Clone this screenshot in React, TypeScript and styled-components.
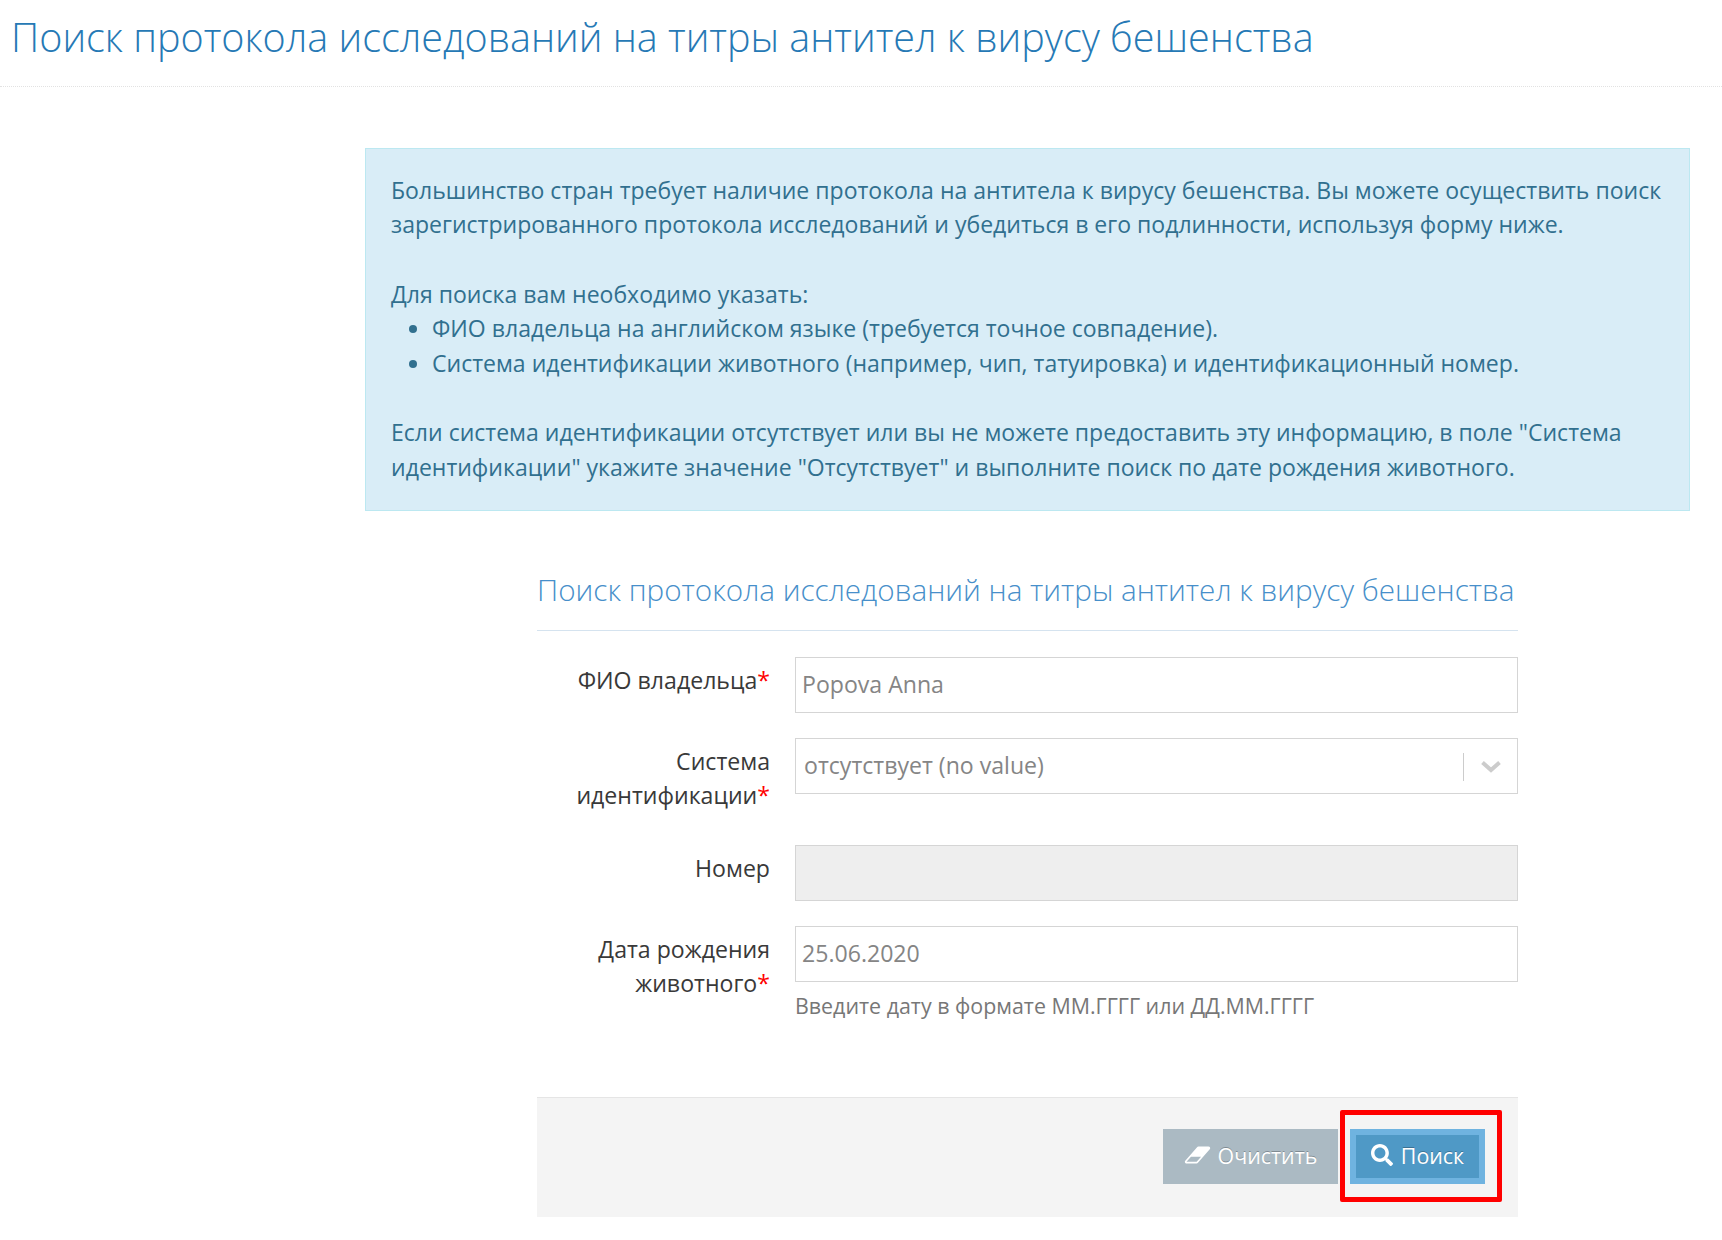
import { FC, ReactNode } from "react";
import styled, { createGlobalStyle } from "styled-components";
import { FaSearch } from "react-icons/fa";

const GlobalStyle = createGlobalStyle`
    * { box-sizing: border-box; }
    html, body { margin: 0; padding: 0; background: #fff; }
    body {
        font-family: "Open Sans", "Noto Sans", sans-serif;
        font-size: 23.1px;
        color: #393939;
    }
`
const Page = styled.div`
    width: 1722px;
    height: 1240px;
    overflow: hidden;
`
const PageHeader = styled.div`
    height: 87px;
    padding: 10px 0 0 11px;
    border-bottom: 1px dotted #e2e2e2;
`
const PageTitle = styled.h1`
    margin: 0;
    font-size: 39.5px;
    line-height: 54px;
    font-weight: 300;
    color: #2679b5;
    white-space: nowrap;
`
const Alert = styled.div`
    margin: 61px 32px 0 365px;
    height: 363px;
    padding: 23.6px 18px 0 25px;
    background: #d9edf7;
    border: 1px solid #bce8f1;
    color: #31708f;
    font-size: 23.04px;
    line-height: 34.5px;
`
const AlertText = styled.p`
    margin: 0;
`
const AlertGap = styled.div`
    height: 35px;
`
const AlertList = styled.ul`
    margin: 0;
    padding: 0 0 0 41px;
`
const Form = styled.form`
    margin: 50px 0 0 537px;
    width: 981px;
`
const Legend = styled.div`
    height: 70px;
    padding-top: 8px;
    border-bottom: 1px solid #d5e3ef;
    font-size: 29.65px;
    line-height: 42px;
    font-weight: 300;
    color: #478fca;
    white-space: nowrap;
`
const Fields = styled.div`
    display: flex;
    flex-direction: column;
    padding-top: 26px;
`
const Row = styled.div<{ $height: number }>`
    display: grid;
    grid-template-columns: 233px 723px;
    column-gap: 25px;
    height: ${(p) => p.$height}px;
`
const Label = styled.label`
    padding-top: 6px;
    text-align: right;
    line-height: 34px;
    color: #393939;
`
const Star = styled.span`
    color: #f00;
`
const TextInput = styled.input`
    display: block;
    width: 100%;
    height: 56px;
    padding: 0 6px 2px;
    border: 1px solid #d5d5d5;
    border-radius: 0;
    outline: none;
    background: ${(p) => (p.disabled ? "#eee" : "#fff")};
    font: inherit;
    color: #858585;
`
const Hint = styled.div`
    margin-top: 9px;
    font-size: 21.4px;
    line-height: 30px;
    color: #777;
    white-space: nowrap;
`
const SelectBox = styled.div`
    display: flex;
    align-items: center;
    height: 56px;
    padding-left: 8px;
    border: 1px solid #d5d5d5;
    color: #858585;
`
const SelectValue = styled.div`
    flex: 1;
    padding-bottom: 2px;
`
const SelectArrow = styled.div`
    display: flex;
    align-items: center;
    justify-content: center;
    width: 54px;
    height: 28px;
    margin-top: 2px;
    border-left: 1px solid #ccc;
    color: #ccc;
`
const Footer = styled.div`
    position: relative;
    display: flex;
    justify-content: flex-end;
    align-items: flex-start;
    gap: 12px;
    height: 120px;
    margin-top: 51px;
    padding: 31px 33px 0 0;
    background: #f4f4f4;
    border-top: 1px solid #e5e5e5;
`
const Button = styled.button<{ $primary?: boolean }>`
    display: flex;
    align-items: center;
    justify-content: center;
    gap: ${(p) => (p.$primary ? 8 : 7)}px;
    width: ${(p) => (p.$primary ? 135 : 175)}px;
    height: 55px;
    padding: 0 0 3px;
    border: 6px solid ${(p) => (p.$primary ? "#6fb3e0" : "#abbac3")};
    border-radius: 0;
    background: ${(p) => (p.$primary ? "#4f99c6" : "#abbac3")};
    color: #fff;
    font-family: inherit;
    font-size: 21.4px;
    text-shadow: 0 -1px 0 rgba(0, 0, 0, 0.25);
`
const Highlight = styled.div`
    position: absolute;
    left: 803px;
    top: 12px;
    width: 162px;
    height: 92px;
    border: 5px solid #f00;
    border-radius: 2px;
    pointer-events: none;
`

const EraserIcon: FC = () => (
    <svg width="27" height="24" viewBox="0 0 2048 1792" fill="#fff">
        <path d="M960 1408l336-384h-768l-336 384h768zm1013-1077q15 34 9.5 71.5t-30.5 65.5l-896 1024q-38 44-96 44h-768q-38 0-69.5-20.5t-47.5-54.5q-15-34-9.5-71.5t30.5-65.5l896-1024q38-44 96-44h768q38 0 70 20.5t47 54.5z" />
    </svg>
)

const ChevronIcon: FC = () => (
    <svg width="20" height="12" viewBox="0 0 20 12" fill="none" stroke="currentColor" strokeWidth="4">
        <path d="M1.5 1.5L10 9l8.5-7.5" />
    </svg>
)

const Field: FC<{ label: ReactNode, required?: boolean, height: number, children: ReactNode }> = ({ label, required, height, children }) => (
    <Row $height={height}>
        <Label>
            {label}
            {required && <Star>*</Star>}
        </Label>
        <div>{children}</div>
    </Row>
)

const title = "Поиск протокола исследований на титры антител к вирусу бешенства"

const App: FC = () => {
    return (
        <Page>
            <GlobalStyle />
            <PageHeader>
                <PageTitle>{title}</PageTitle>
            </PageHeader>
            <Alert>
                <AlertText>
                    Большинство стран требует наличие протокола на антитела к вирусу бешенства. Вы можете осуществить поиск зарегистрированного протокола исследований и убедиться в его подлинности, используя форму ниже.
                </AlertText>
                <AlertGap />
                <AlertText>Для поиска вам необходимо указать:</AlertText>
                <AlertList>
                    <li>ФИО владельца на английском языке (требуется точное совпадение).</li>
                    <li>Система идентификации животного (например, чип, татуировка) и идентификационный номер.</li>
                </AlertList>
                <AlertGap />
                <AlertText>
                    Если система идентификации отсутствует или вы не можете предоставить эту информацию, в поле "Система идентификации" укажите значение "Отсутствует" и выполните поиск по дате рождения животного.
                </AlertText>
            </Alert>
            <Form>
                <Legend>{title}</Legend>
                <Fields>
                    <Field label="ФИО владельца" required height={81}>
                        <TextInput readOnly value="Popova Anna" />
                    </Field>
                    <Field label={<>Система<br />идентификации</>} required height={107}>
                        <SelectBox>
                            <SelectValue>отсутствует (no value)</SelectValue>
                            <SelectArrow><ChevronIcon /></SelectArrow>
                        </SelectBox>
                    </Field>
                    <Field label="Номер" height={81}>
                        <TextInput disabled />
                    </Field>
                    <Field label={<>Дата рождения<br />животного</>} required height={120}>
                        <TextInput readOnly value="25.06.2020" />
                        <Hint>Введите дату в формате ММ.ГГГГ или ДД.ММ.ГГГГ</Hint>
                    </Field>
                </Fields>
                <Footer>
                    <Button type="button"><EraserIcon />Очистить</Button>
                    <Button type="button" $primary><FaSearch size={22} />Поиск</Button>
                    <Highlight />
                </Footer>
            </Form>
        </Page>
    )
}
export default App
